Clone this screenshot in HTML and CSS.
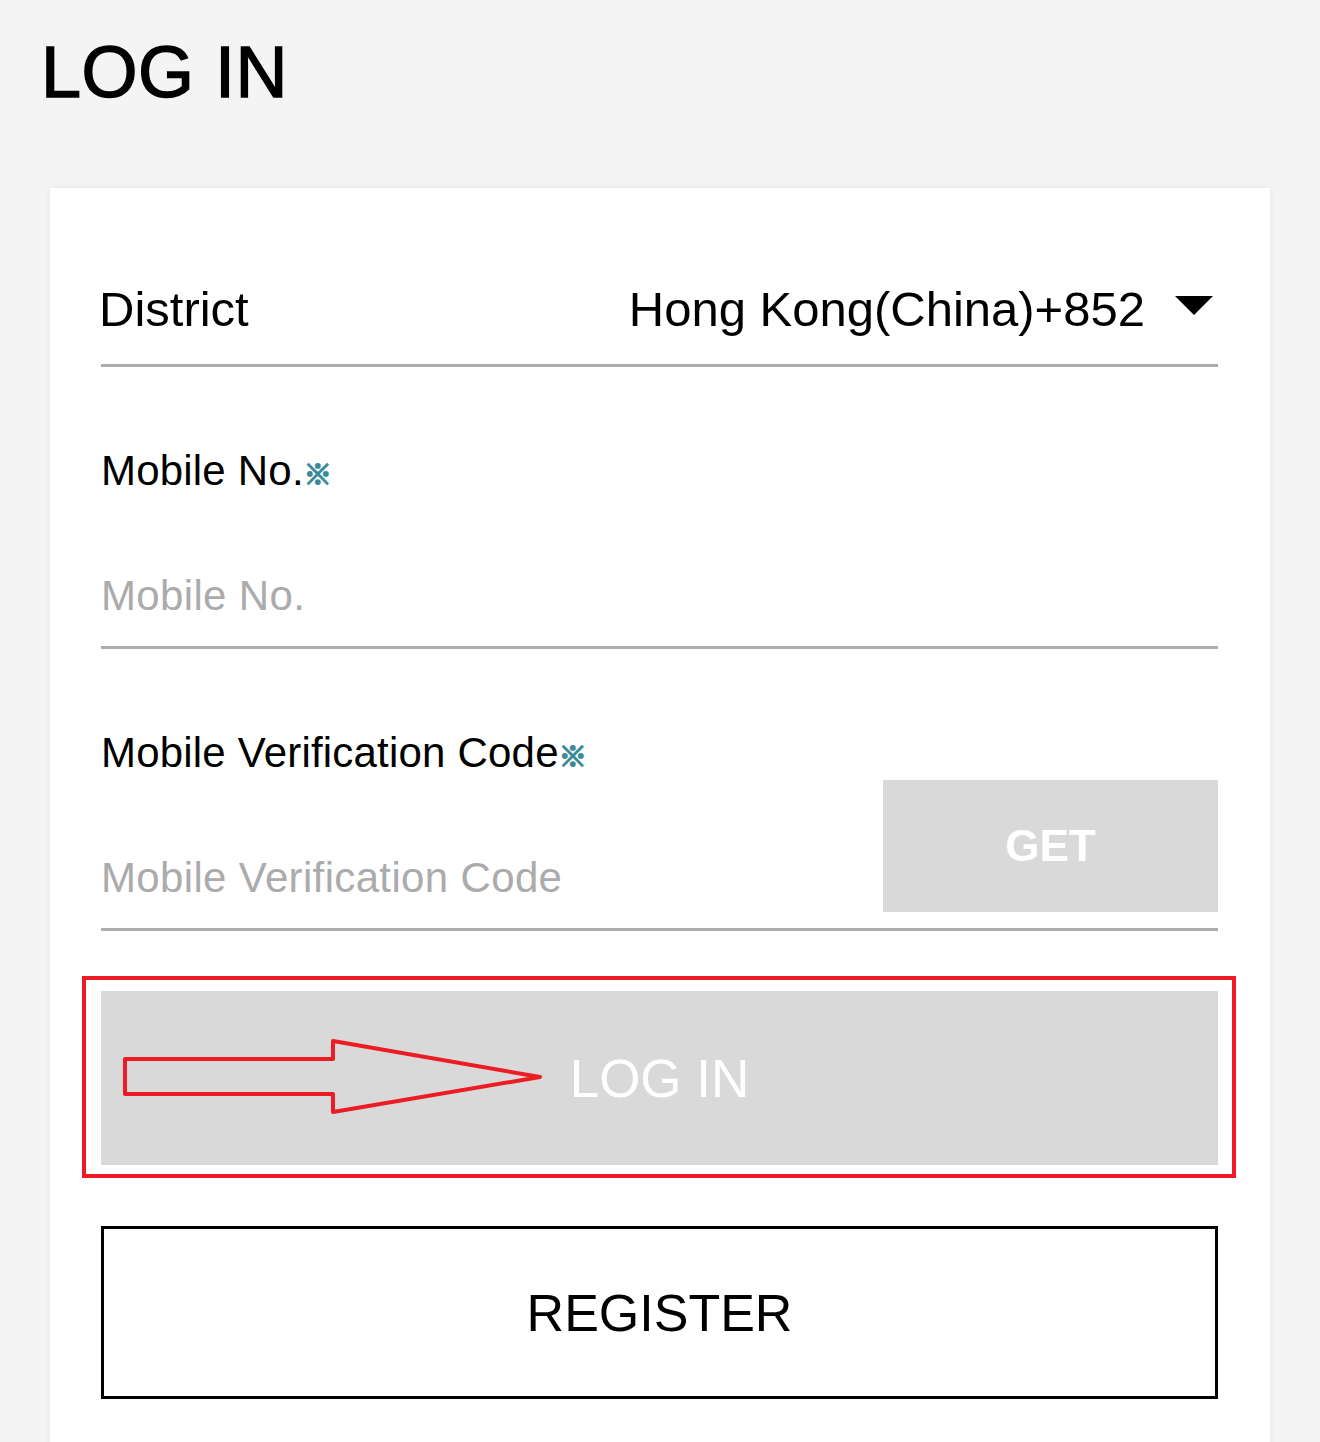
FILE: index.html
```html
<!DOCTYPE html>
<html lang="en">
<head>
<meta charset="utf-8">
<title>LOG IN</title>
<link rel="stylesheet" href="styles.css">
</head>
<body>
<h1 class="page-title">LOG IN</h1>
<main class="card">
  <div class="district-row">
    <span class="district-label">District</span>
    <span class="district-value">
      <span>Hong Kong(China)+852</span>
      <svg class="caret" width="38" height="19" viewBox="0 0 38 19"><polygon points="0,0 38,0 19,19" fill="#000"/></svg>
    </span>
  </div>

  <div class="field-label">Mobile No.<span class="req">※</span></div>
  <div class="input-row">
    <input class="text-input" type="tel" placeholder="Mobile No.">
  </div>

  <div class="field-label">Mobile Verification Code<span class="req">※</span></div>
  <div class="input-row code-row">
    <input class="text-input code-input" type="text" placeholder="Mobile Verification Code">
    <button class="get-btn" type="button">GET</button>
  </div>

  <div class="highlight">
    <button class="login-btn" type="button">
      <svg class="arrow" width="425" height="81" viewBox="0 0 425 81">
        <polygon points="5,23 213,23 213,5 420,41 213,76 213,58 5,58" fill="none" stroke="#ed1c24" stroke-width="4" stroke-linejoin="round"/>
      </svg>
      <span>LOG IN</span>
    </button>
  </div>

  <button class="register-btn" type="button">REGISTER</button>
</main>
</body>
</html>
```
FILE: styles.css
```css
html, body {
  margin: 0;
  padding: 0;
}
body {
  background: #f4f4f4;
  font-family: "Liberation Sans", Arial, "Noto Sans CJK SC", sans-serif;
  color: #000;
  width: 1320px;
  height: 1442px;
  overflow: hidden;
}
.page-title {
  margin: 0;
  padding: 32px 0 0 41px;
  font-size: 72px;
  font-weight: 400;
  line-height: 80px;
  height: 158px;
  box-sizing: border-box;
  letter-spacing: 0.5px;
  -webkit-text-stroke: 1.4px #000;
}
.card {
  display: block;
  margin: 30px 0 0 50px;
  width: 1220px;
  box-sizing: border-box;
  background: #fff;
  padding: 91px 52px 80px 51px;
  box-shadow: 0 0 6px rgba(0, 0, 0, 0.07);
}
.district-row {
  display: flex;
  justify-content: space-between;
  align-items: center;
  font-size: 49px;
  line-height: 60px;
  padding-bottom: 25px;
  border-bottom: 3px solid #adadad;
}
.district-label {
  margin-left: -2px;
}
.district-value {
  display: flex;
  align-items: center;
  gap: 30px;
  padding-right: 5px;
}
.caret {
  display: block;
  margin-top: -8px;
}
.field-label {
  font-size: 42px;
  line-height: 48px;
  margin-top: 80px;
  letter-spacing: 0.2px;
}
.req {
  font-family: "Noto Sans CJK SC", sans-serif;
  font-weight: 700;
  color: #3a8c98;
  font-size: 28px;
  line-height: 1;
  letter-spacing: 0;
  -webkit-text-stroke: 1.6px #3a8c98;
}
.input-row {
  display: flex;
  align-items: flex-end;
  margin-top: 77px;
  padding-bottom: 26px;
  border-bottom: 3px solid #adadad;
}
.text-input {
  flex: 1;
  min-width: 0;
  height: 48px;
  padding: 0;
  margin: 0;
  border: none;
  outline: none;
  background: transparent;
  font-family: "Liberation Sans", Arial, sans-serif;
  font-size: 42px;
  letter-spacing: 0.35px;
  color: #000;
}
.text-input::placeholder {
  color: #ababab;
  opacity: 1;
}
.code-row {
  margin-top: 3px;
  padding-bottom: 16px;
}
.code-input {
  margin-bottom: 10px;
}
.get-btn {
  width: 335px;
  height: 132px;
  flex: none;
  border: none;
  margin: 0;
  padding: 0;
  background: #d9d9d9;
  color: #fff;
  font-family: "Liberation Sans", Arial, sans-serif;
  font-size: 44px;
  font-weight: 700;
}
.highlight {
  margin: 45px -18px 0 -19px;
  border: 4px solid #ed1c24;
  padding: 11px 14px 9px 15px;
}
.login-btn {
  position: relative;
  display: flex;
  align-items: center;
  justify-content: center;
  width: 100%;
  height: 174px;
  border: none;
  margin: 0;
  padding: 0;
  background: #d9d9d9;
  color: #fff;
  font-family: "Liberation Sans", Arial, sans-serif;
  font-size: 53px;
}
.arrow {
  position: absolute;
  left: 19px;
  top: 45px;
}
.register-btn {
  display: block;
  width: 100%;
  height: 173px;
  margin: 48px 0 0;
  padding: 0;
  border: 3px solid #000;
  background: #fff;
  color: #000;
  font-family: "Liberation Sans", Arial, sans-serif;
  font-size: 52px;
}
```
